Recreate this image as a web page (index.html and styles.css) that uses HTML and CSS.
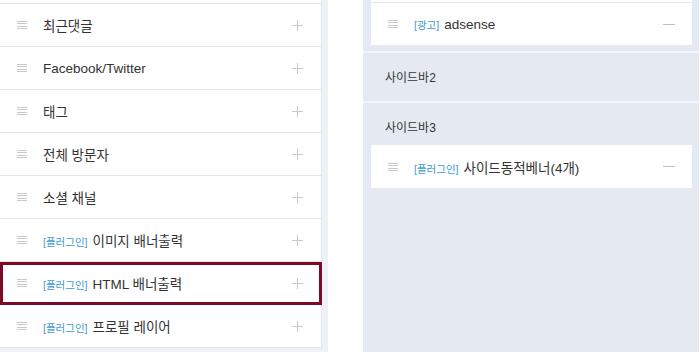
FILE: index.html
```html
<!DOCTYPE html>
<html lang="ko">
<head>
  <meta charset="UTF-8" />
  <meta name="viewport" content="width=device-width, initial-scale=1.0"/>
  <title>사이드바 관리</title>
  <link rel="stylesheet" href="styles.css">
</head>
<body>
  <div class="layout">
    <!-- widgets that can be added -->
    <div class="widget-pool">
      <ul class="widget-list pool-list">
        <li class="widget-cut"></li>
        <li class="widget">
          <span class="handle"></span>
          <span class="name">최근댓글</span>
          <span class="btn-add"></span>
        </li>
        <li class="widget">
          <span class="handle"></span>
          <span class="name">Facebook/Twitter</span>
          <span class="btn-add"></span>
        </li>
        <li class="widget">
          <span class="handle"></span>
          <span class="name">태그</span>
          <span class="btn-add"></span>
        </li>
        <li class="widget">
          <span class="handle"></span>
          <span class="name">전체 방문자</span>
          <span class="btn-add"></span>
        </li>
        <li class="widget">
          <span class="handle"></span>
          <span class="name">소셜 채널</span>
          <span class="btn-add"></span>
        </li>
        <li class="widget">
          <span class="handle"></span>
          <span class="name"><span class="tag">[플러그인]</span>이미지 배너출력</span>
          <span class="btn-add"></span>
        </li>
        <li class="widget selected">
          <span class="handle"></span>
          <span class="name"><span class="tag">[플러그인]</span>HTML 배너출력</span>
          <span class="btn-add"></span>
        </li>
        <li class="widget">
          <span class="handle"></span>
          <span class="name"><span class="tag">[플러그인]</span>프로필 레이어</span>
          <span class="btn-add"></span>
        </li>
      </ul>
    </div>

    <!-- sidebars -->
    <div class="sidebars">
      <section class="sidebar">
        <ul class="widget-list card">
          <li class="widget-cut"></li>
          <li class="widget">
            <span class="handle"></span>
            <span class="name"><span class="tag">[광고]</span>adsense</span>
            <span class="btn-remove"></span>
          </li>
        </ul>
      </section>

      <section class="sidebar">
        <h3 class="sidebar-title">사이드바2</h3>
      </section>

      <section class="sidebar">
        <h3 class="sidebar-title">사이드바3</h3>
        <ul class="widget-list card">
          <li class="widget">
            <span class="handle"></span>
            <span class="name"><span class="tag">[플러그인]</span>사이드동적베너(4개)</span>
            <span class="btn-remove"></span>
          </li>
        </ul>
      </section>
    </div>
  </div>
</body>
</html>
```

FILE: styles.css
```css
* {
  box-sizing: border-box;
}

body {
  margin: 0;
  background: #fff;
  font-family: 'Liberation Sans', 'Noto Sans CJK KR', sans-serif;
  color: #333;
  overflow: hidden;
}

.layout {
  display: flex;
  gap: 35px;
  height: 352px;
}

.widget-pool {
  width: 328px;
  padding-right: 6px;
  background: #eef1f5;
}

.widget-list {
  list-style: none;
  margin: 0;
  padding: 0;
}

/* list is scrolled: only the bottom edge of the row above shows */
.widget-cut {
  height: 2px;
  background: #fff;
}

.pool-list .widget-cut {
  height: 4px;
  border-bottom: 1px solid #e6e6e6;
  border-right: 1px solid #e6e6e6;
}

.widget {
  display: flex;
  align-items: center;
  height: 43px;
  padding: 0 17px;
  background: #fff;
}

.pool-list .widget {
  border-bottom: 1px solid #e6e6e6;
  border-right: 1px solid #e6e6e6;
}

.widget.selected {
  outline: 3px solid #7c0a26;
  outline-offset: -3px;
}

.handle {
  width: 10px;
  height: 8px;
  margin-right: 16px;
  flex-shrink: 0;
  background: repeating-linear-gradient(to bottom, #c9c9c9 0, #c9c9c9 1px, transparent 1px, transparent 2.34px);
}

.name {
  flex: 1;
  font-size: 13.5px;
  white-space: nowrap;
}

.tag {
  font-size: 10.5px;
  color: #3d9ad1;
  margin-right: 5px;
}

.btn-add {
  position: relative;
  width: 11px;
  height: 11px;
  margin-right: 1px;
}

.btn-add::before,
.btn-add::after {
  content: '';
  position: absolute;
  background: #c8c8c8;
}

.btn-add::before {
  left: 0;
  right: 0;
  top: 5px;
  height: 1px;
}

.btn-add::after {
  top: 0;
  bottom: 0;
  left: 5px;
  width: 1px;
}

.btn-remove {
  width: 12px;
  height: 1px;
  background: #c0c0c0;
}

.sidebars {
  width: 336px;
  background: #e5eaf2;
}

.sidebar {
  padding: 0 7px 6px 8px;
}

.sidebar + .sidebar {
  border-top: 2px solid #f4f6fa;
}

.sidebar-title {
  margin: 0;
  height: 42px;
  padding: 4px 0 0 14px;
  display: flex;
  align-items: center;
  font-size: 12px;
  font-weight: normal;
  color: #333;
}

.card {
  background: #fff;
}

.card .widget-cut + .widget,
.card .widget + .widget {
  border-top: 1px solid #e8e8e8;
}
```
